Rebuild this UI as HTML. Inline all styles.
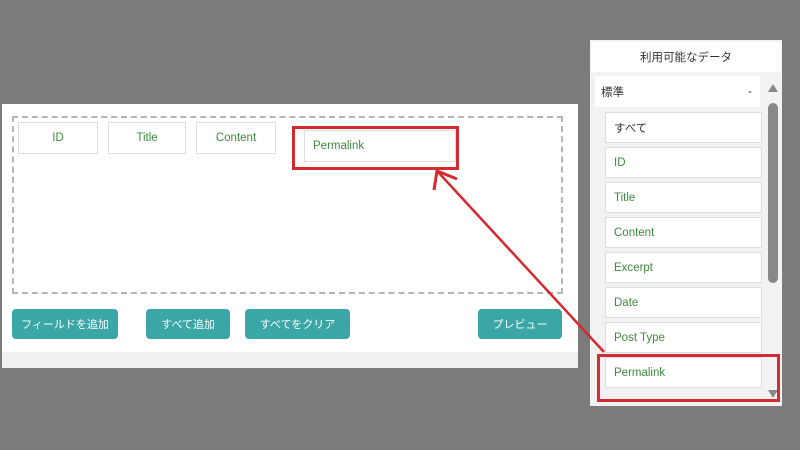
<!DOCTYPE html><html><head><meta charset="utf-8"><style>
body{margin:0;width:800px;height:450px;background:#7b7b7b;position:relative;overflow:hidden;font-family:"Liberation Sans","Noto Sans CJK JP",sans-serif;font-size:11.5px}
.a{position:absolute;box-sizing:border-box}
.chip{background:#fff;border:1px solid #ddd;color:#3d8a3d;display:flex;align-items:center;justify-content:center}
.btn{background:#3aa6a6;color:#fff;border-radius:4px;display:flex;align-items:center;justify-content:center;font-size:11px}
.it{background:#fff;border:1px solid #ddd;color:#3d8a3d;padding-left:8px;display:flex;align-items:center;left:605px;width:157px;height:31px}
</style></head><body>
<div class="a" style="left:2px;top:104px;width:576px;height:264px;background:#fff"></div>
<div class="a" style="left:2px;top:352px;width:576px;height:16px;background:#f0f0f0"></div>
<div class="a" style="left:12px;top:116px;width:551px;height:178px;border:2px dashed #b5b5b5"></div>
<div class="a chip" style="left:18px;top:122px;width:80px;height:32px">ID</div>
<div class="a chip" style="left:108px;top:122px;width:78px;height:32px">Title</div>
<div class="a chip" style="left:196px;top:122px;width:80px;height:32px">Content</div>
<div class="a chip" style="left:304px;top:130px;width:152px;height:32px;justify-content:flex-start;padding-left:8px">Permalink</div>
<div class="a" style="left:292px;top:126px;width:167px;height:44px;border:3px solid #d42a32"></div>
<div class="a btn" style="left:12px;top:309px;width:106px;height:30px">フィールドを追加</div>
<div class="a btn" style="left:146px;top:309px;width:84px;height:30px">すべて追加</div>
<div class="a btn" style="left:245px;top:309px;width:105px;height:30px">すべてをクリア</div>
<div class="a btn" style="left:478px;top:309px;width:84px;height:30px">プレビュー</div>
<div class="a" style="left:590px;top:40px;width:192px;height:366px;background:#f2f2f2"></div>
<div class="a" style="left:591px;top:42px;width:190px;height:30px;background:#fff;display:flex;align-items:center;justify-content:center;color:#333">利用可能なデータ</div>
<div class="a" style="left:595px;top:76px;width:165px;height:31px;background:#fff;display:flex;align-items:center;padding-left:6px;color:#333">標準<span style="position:absolute;right:8px">-</span></div>
<div class="a it" style="top:112px;color:#333">すべて</div>
<div class="a it" style="top:147px">ID</div>
<div class="a it" style="top:182px">Title</div>
<div class="a it" style="top:217px">Content</div>
<div class="a it" style="top:252px">Excerpt</div>
<div class="a it" style="top:287px">Date</div>
<div class="a it" style="top:322px">Post Type</div>
<div class="a it" style="top:357px">Permalink</div>
<div class="a" style="left:768px;top:103px;width:10px;height:180px;background:#888;border-radius:5px"></div>
<svg class="a" style="left:0;top:0" width="800" height="450">
<polygon points="768,92 778,92 773,84" fill="#888"/>
<polygon points="768,390 778,390 773,398" fill="#888"/>
<rect x="598.5" y="355.5" width="180" height="45" fill="none" stroke="#d42a32" stroke-width="3"/>
<line x1="604" y1="352" x2="438" y2="172" stroke="#d42a32" stroke-width="2.5"/>
<polyline points="434,190 437,171 457,179" fill="none" stroke="#d42a32" stroke-width="3"/>
</svg>
</body></html>
